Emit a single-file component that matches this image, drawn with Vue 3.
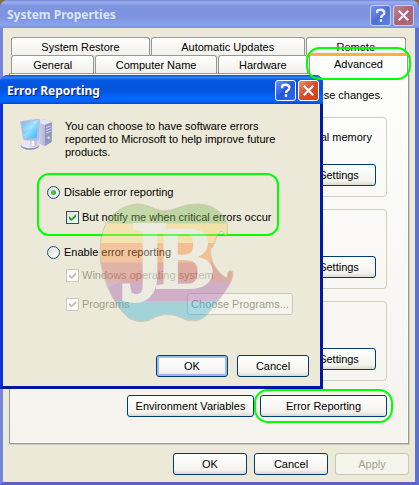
<script setup>
import { ref } from 'vue'

const backTabs = ['System Restore', 'Automatic Updates', 'Remote']
const frontTabs = ['General', 'Computer Name', 'Hardware', 'Advanced']
const activeTab = ref('Advanced')

const groups = [
  { name: 'performance', text: 'virtual memory' },
  { name: 'profiles', text: '' },
  { name: 'startup', text: '' }
]

const stripes = ['#7bb753', '#fdd765', '#fd8233', '#cd4e4c', '#a558b0', '#37b2d8']

const mode = ref('disable')
const notify = ref(true)
const reportWindows = ref(true)
const reportPrograms = ref(true)
</script>

<template>
  <div class="window">
    <header class="titlebar">
      <h1>System Properties</h1>
      <button class="caption" type="button" aria-label="Help">
        <svg viewBox="0 0 20 20"><path d="M6.5 7.5V6q0-2 3.500-2 4 0 4 3 0 2-2 3-1.500 1-1.500 2.500M10.500 14v2.500" /></svg>
      </button>
      <button class="caption close" type="button" aria-label="Close">
        <svg viewBox="0 0 20 20"><path d="M5 5l10 10M15 5L5 15" /></svg>
      </button>
    </header>

    <main class="content">
      <div class="tabs back">
        <button v-for="t in backTabs" :key="t" type="button" class="tab" @click="activeTab = t">{{ t }}</button>
      </div>
      <div class="tabs front">
        <button
          v-for="t in frontTabs"
          :key="t"
          type="button"
          class="tab"
          :class="{ active: activeTab === t, marked: t === 'Advanced' }"
          @click="activeTab = t"
        >
          {{ t }}
        </button>
      </div>

      <div class="panel">
        <p class="intro">these changes.</p>
        <section v-for="g in groups" :key="g.name" class="group">
          <p>{{ g.text }}</p>
          <button class="btn" type="button">Settings</button>
        </section>
        <div class="panel-actions">
          <button class="btn" type="button">Environment Variables</button>
          <button class="btn marked" type="button">Error Reporting</button>
        </div>
      </div>

      <footer class="actions">
        <button class="btn" type="button">OK</button>
        <button class="btn" type="button">Cancel</button>
        <button class="btn" type="button" disabled>Apply</button>
      </footer>
    </main>

    <div class="dialog" role="dialog" aria-label="Error Reporting">
      <header class="titlebar">
        <h2>Error Reporting</h2>
        <button class="caption" type="button" aria-label="Help">
          <svg viewBox="0 0 20 20"><path d="M6.500 7.500V6q0-2 3.500-2 4 0 4 3 0 2-2 3-1.500 1-1.500 2.500M10.500 14v2.500" /></svg>
        </button>
        <button class="caption close" type="button" aria-label="Close">
          <svg viewBox="0 0 20 20"><path d="M5 5l10 10M15 5L5 15" /></svg>
        </button>
      </header>

      <div class="dialog-body">
        <div class="message">
          <svg class="computer" viewBox="0 0 96 96">
            <defs>
              <linearGradient id="screen" x1="0" y1="0" x2="1" y2="1">
                <stop offset="0" stop-color="#3d9bf0" />
                <stop offset=".5" stop-color="#8fe0ff" />
                <stop offset="1" stop-color="#3fa9f5" />
              </linearGradient>
              <linearGradient id="tower" x1="0" y1="0" x2="1" y2="0">
                <stop offset="0" stop-color="#cfd3ec" />
                <stop offset="1" stop-color="#9a9dc6" />
              </linearGradient>
            </defs>
            <path d="M54 12l16-9 25 10v58L75 84 54 76z" fill="url(#tower)" />
            <path d="M54 12l16-9 25 10-20 8z" fill="#e4e6f5" />
            <path d="M75 21l20-8v58L75 84z" fill="#9296c2" />
            <path d="M78 29l14-5M78 37l14-5M78 45l14-5" stroke="#d5d8ef" stroke-width="3" />
            <circle cx="86" cy="59" r="4" fill="#c5e8a0" />
            <ellipse cx="30" cy="83" rx="28" ry="12" fill="#8588ae" />
            <ellipse cx="30" cy="80" rx="27" ry="11" fill="#e6e8f5" />
            <path d="M31 62l20 2 2 18q-10 9-22 3z" fill="#c2c5df" />
            <path d="M36 64l7 1v19l-9-1z" fill="#fff" />
            <path d="M0 10L55 2q6 0 6 5l-5 55q0 6-6 7L15 67q-5 0-6-6z" fill="#b9bcdc" />
            <path d="M5 14l50-8-5 55-36 2z" fill="url(#screen)" />
            <path d="M5 14l50-8-18 24-26 10z" fill="#fff" opacity=".25" />
          </svg>
          <p>You can choose to have software errors<br />reported to Microsoft to help improve future<br />products.</p>
        </div>

        <div class="choices">
          <div class="choice-box">
            <label class="option"><input v-model="mode" type="radio" name="mode" value="disable" />Disable error reporting</label>
            <label class="option sub"><input v-model="notify" type="checkbox" />But notify me when critical errors occur</label>
          </div>
          <div class="enable">
            <label class="option"><input v-model="mode" type="radio" name="mode" value="enable" />Enable error reporting</label>
            <label class="option sub off"><input v-model="reportWindows" type="checkbox" disabled />Windows operating system</label>
            <div class="programs">
              <label class="option sub off"><input v-model="reportPrograms" type="checkbox" disabled />Programs</label>
              <button class="btn" type="button" disabled>Choose Programs...</button>
            </div>
          </div>
        </div>

        <footer class="dialog-actions">
          <button class="btn default" type="button">OK</button>
          <button class="btn" type="button">Cancel</button>
        </footer>
      </div>

      <svg class="watermark" viewBox="0 0 450 420" aria-hidden="true">
        <defs>
          <clipPath id="apple">
            <path d="M135 57C175 56 190 77 225 77C255 77 280 56 325 57C370 58 402 85 412 118L412 152Q402 157 400 148Q401 136 390 140C375 155 377 180 362 192C358 225 380 260 408 278Q415 275 413 264Q420 252 429 262C430 300 380 350 350 390C320 420 285 404 270 397C240 384 210 387 190 400C165 414 135 412 115 398C75 365 31 280 30 205C30 145 45 75 135 57Z" />
          </clipPath>
        </defs>
        <g clip-path="url(#apple)">
          <rect v-for="(c, i) in stripes" :key="c" x="0" :y="i * 58 + 58 - (i ? 0 : 10)" width="450" :height="i ? 65 : 68" :fill="c" />
          <path d="M0 340L190 235V0H0z" fill="#fff" opacity=".12" />
        </g>
        <path d="M135 57C175 56 190 77 225 77C255 77 280 56 325 57C370 58 402 85 412 118L412 152Q402 157 400 148Q401 136 390 140C375 155 377 180 362 192C358 225 380 260 408 278Q415 275 413 264Q420 252 429 262C430 300 380 350 350 390C320 420 285 404 270 397C240 384 210 387 190 400C165 414 135 412 115 398C75 365 31 280 30 205C30 145 45 75 135 57Z" fill="none" stroke="#a0a080" stroke-width="3" />
        <text class="letter-j" x="96" y="344">J</text>
        <text class="letter-b" x="194" y="312">B</text>
      </svg>
    </div>
  </div>
</template>

<style>
body {
  margin: 0;
  background: #8a6a45;
}
</style>

<style scoped>
* {
  box-sizing: border-box;
}

.window {
  position: relative;
  display: flex;
  flex-direction: column;
  min-height: 100vh;
  border: solid #7486dc;
  border-width: 0 4px 3px 3px;
  border-right-color: #606fcb;
  border-bottom-color: #5d62bf;
  border-radius: 8px 8px 0 0;
  background: #ece9d8;
  color: #000;
  font: 11px/13px "Liberation Sans", Arial, sans-serif;
}

h1,
h2,
p {
  margin: 0;
}

button {
  padding: 0;
  color: inherit;
  font: inherit;
}

.titlebar {
  display: flex;
  align-items: center;
  gap: 2px;
  height: 28px;
  margin: 0 -4px 0 -3px;
  padding: 2px 5px 0 7px;
  border-radius: 8px 8px 0 0;
  background: linear-gradient(#7585d9 0, #9bb0ee 8%, #7f94df 20%, #7d93df 60%, #87a3ed 88%, #7f91db 100%);
}

.titlebar h1,
.titlebar h2 {
  flex: 1;
  color: #dbe4fb;
  font: bold 12px/18px "Noto Sans", "Open Sans", sans-serif;
}

.caption {
  width: 21px;
  height: 21px;
  border: 1px solid #c7d3f5;
  border-radius: 3px;
  background: linear-gradient(135deg, #7893ec, #4f6fda 50%, #5d80e6);
}

.caption svg {
  display: block;
  width: 100%;
  height: 100%;
  fill: none;
  stroke: #e6ecfc;
  stroke-width: 2.5;
}

.caption.close {
  background: linear-gradient(135deg, #c08599, #ab616f 50%, #b06b78);
}

.content {
  display: flex;
  flex: 1;
  flex-direction: column;
  padding: 9px 6px 7px;
}

.tabs {
  display: flex;
  gap: 1px;
  height: 18px;
  padding: 0 1px 0 2px;
}

.tabs.back {
  padding-right: 3px;
}

.tab {
  position: relative;
  flex: 100 1 0;
  padding-top: 2px;
  border: 1px solid #919b9c;
  border-bottom: 0;
  border-radius: 3px 3px 0 0;
  background: linear-gradient(#fff, #f1f0ea);
  white-space: nowrap;
}

.back .tab:nth-child(1) {
  flex-grow: 139;
}

.back .tab:nth-child(2) {
  flex-grow: 154;
}

.front .tab:nth-child(1) {
  flex-grow: 84;
}

.front .tab:nth-child(2) {
  flex-grow: 123;
}

.front .tab:nth-child(3) {
  flex-grow: 91;
}

.tab.active {
  height: 21px;
  margin-top: -2px;
  padding: 0 0 2px;
  border-top: 3px solid #fbb03c;
  background: #fdfdfc;
}

/* green ring around the items to follow */
.marked {
  position: relative;
}

.marked::after {
  position: absolute;
  z-index: 3;
  border: 2px solid #0f0;
  border-radius: 14px;
  content: "";
  inset: -7px;
  pointer-events: none;
}

.tab.marked::after {
  inset: -9px -4px -6px;
}

.panel {
  display: flex;
  flex: 1;
  flex-direction: column;
  gap: 12px;
  padding: 14px 21px 24px 13px;
  border: 1px solid #919b9c;
  box-shadow: inset -1px -1px #fff, 1px 1px #d0cebf;
  background: linear-gradient(#fdfdfc, #f4f3ee);
}

.intro,
.group p {
  display: flex;
  justify-content: flex-end;
  height: 14px;
  line-height: 14px;
  white-space: nowrap;
}

.intro {
  margin: 0 4px 3px 0;
}

.group {
  padding: 12px 10px 10px;
  border: 1px solid #d0d0bf;
  border-radius: 4px;
}

.group p {
  margin: 0 4px 20px 0;
}

.group .btn {
  display: block;
  margin-left: auto;
}

.btn {
  width: 74px;
  height: 22px;
  border: 1px solid #003c74;
  border-radius: 3px;
  background: linear-gradient(#fff, #f4f3ee 80%, #dcd8cc);
  white-space: nowrap;
}

.btn:disabled {
  border-color: #c9c7ba;
  background: #f5f4ea;
  color: #a1a192;
}

.btn.default {
  box-shadow: inset 0 0 0 2px #9ebbee;
}

.panel-actions {
  display: flex;
  justify-content: flex-end;
  gap: 6px;
  padding-top: 2px;
}

.panel-actions .btn {
  width: 127px;
}

.actions {
  display: flex;
  justify-content: flex-end;
  gap: 7px;
  padding-top: 9px;
}

.dialog {
  position: absolute;
  z-index: 2;
  top: 75px;
  left: -3px;
  width: 323px;
  border: solid #0831d9;
  border-width: 0 3px 3px;
  border-right-color: #0019a8;
  border-bottom-color: #0014a0;
  border-radius: 8px 8px 0 0;
  background: #ece9d8;
}

.dialog .titlebar {
  height: 29px;
  margin: 0 -3px;
  padding-right: 4px;
  background: linear-gradient(#0a44c8 0, #3188fb 8%, #0458e2 18%, #0353dd 50%, #0467fc 80%, #0563f4 92%, #0042cf 100%);
}

.dialog .titlebar h2 {
  color: #fff;
  text-shadow: 1px 1px #0a1883;
}

.dialog .caption {
  border-color: #fff;
  background: linear-gradient(135deg, #6d94f5, #2456dc 50%, #2e6bee);
}

.dialog .caption.close {
  background: linear-gradient(135deg, #eb9474, #d8492a 50%, #d23f18);
}

.dialog .caption svg {
  stroke: #fff;
}

.dialog-body {
  padding: 14px 11px 9px 17px;
}

.message {
  display: flex;
  gap: 13px;
}

.message p {
  padding-top: 2px;
  white-space: nowrap;
}

.computer {
  flex: none;
  width: 32px;
  height: 32px;
}

.choices {
  padding: 14px 30px 0 17px;
}

.choice-box {
  display: flex;
  flex-direction: column;
  gap: 12px;
  height: 63px;
  padding: 11px 8px;
  border: 2px solid #0f0;
  border-radius: 12px;
}

.enable {
  display: flex;
  flex-direction: column;
  padding: 10px 0 0 10px;
}

.enable > .sub {
  margin-top: 10px;
}

.option {
  display: flex;
  align-items: center;
  gap: 4px;
  height: 13px;
  white-space: nowrap;
}

.option.sub {
  gap: 3px;
  padding-left: 19px;
}

.option.off {
  color: #a1a192;
}

.option input {
  position: relative;
  flex: none;
  width: 13px;
  height: 13px;
  margin: 0;
  appearance: none;
  border: 1px solid #1c5180;
  background: linear-gradient(135deg, #dcdcd7, #fff);
}

.option input[type="radio"] {
  border-radius: 50%;
}

.option input[type="radio"]:checked::after {
  position: absolute;
  border-radius: 50%;
  background: radial-gradient(circle at 40% 40%, #55d551, #1f9a1c);
  content: "";
  inset: 3px;
}

.option input[type="checkbox"]:checked::after {
  position: absolute;
  background: #21a121;
  clip-path: polygon(0 29%, 36% 64%, 100% 0, 100% 43%, 36% 100%, 0 71%);
  content: "";
  inset: 2px;
}

.option input[type="checkbox"]:disabled {
  border-color: #cac8bb;
  background: #fff;
}

.option input[type="checkbox"]:disabled::after {
  background: #c4c2b4;
}

.programs {
  display: flex;
  align-items: center;
  justify-content: space-between;
  margin-top: 11px;
  margin-right: -14px;
}

.programs .btn {
  width: 106px;
}

.dialog-actions {
  display: flex;
  justify-content: flex-end;
  gap: 9px;
  padding-top: 40px;
}

.dialog-actions .btn {
  width: 72px;
}

.watermark {
  position: absolute;
  top: 110px;
  left: 87px;
  width: 150px;
  height: 140px;
  opacity: 0.4;
  pointer-events: none;
}

.watermark text {
  fill: #eceeec;
  stroke: #eceeec;
  font-family: "Liberation Serif", "Times New Roman", serif;
}

.letter-j {
  font-size: 340px;
  stroke-width: 12px;
}

.letter-b {
  font-size: 270px;
  font-weight: bold;
}
</style>
